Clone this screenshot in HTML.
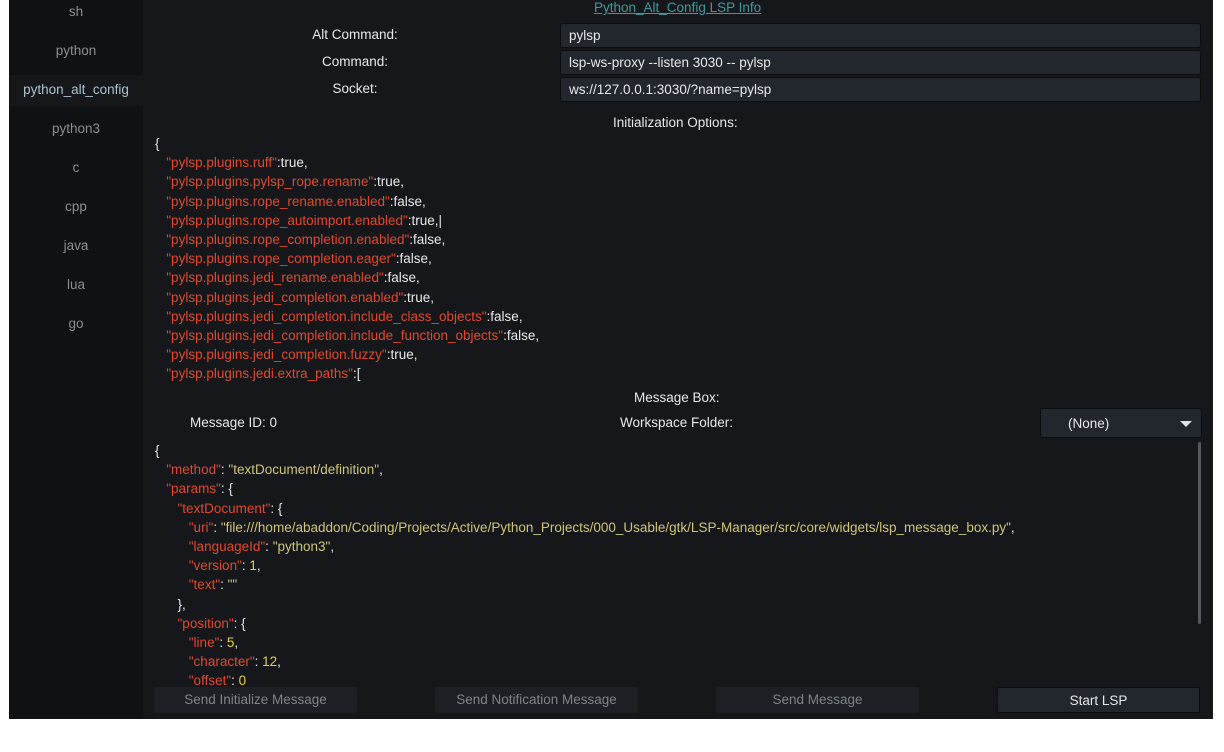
<!DOCTYPE html>
<html><head><meta charset="utf-8"><style>
*{margin:0;padding:0;box-sizing:border-box}
body{width:1224px;height:752px;background:#fff;position:relative;overflow:hidden;font-family:"Liberation Sans",sans-serif;font-size:13.5px;color:#e6e8ea}
#win{position:absolute;left:9px;top:0;width:1204px;height:719px;background:#16171b}
#side{position:absolute;left:9px;top:0;width:134px;height:719px;background:#101114}
.tab{position:absolute;left:9px;width:134px;text-align:center;color:#8a8d92}
.sel{background:#16171b;color:#a9c3d0}
.a{position:absolute;white-space:pre}
.lbl{position:absolute;text-align:center;white-space:nowrap}
.inp{position:absolute;left:560px;width:641px;height:25px;background:#22262d;border:1px solid #0c0d0f;border-radius:3px;padding:4px 0 0 8px}
.k{color:#e0492e}.s{color:#cfc575}.n{color:#e8d23f}.p{color:#e6e8ea}
.btn{position:absolute;top:687px;height:26px;background:#1d1f24;color:#7f838a;text-align:center;padding-top:5px;border-radius:2px}
</style></head><body>
<div id="win"></div><div id="side"></div>
<div class="tab" style="top:4px">sh</div>
<div class="tab" style="top:43px">python</div>
<div class="tab sel" style="top:75px;height:31px;padding-top:7px">python_alt_config</div>
<div class="tab" style="top:121px">python3</div>
<div class="tab" style="top:160px">c</div>
<div class="tab" style="top:199px">cpp</div>
<div class="tab" style="top:238px">java</div>
<div class="tab" style="top:277px">lua</div>
<div class="tab" style="top:316px">go</div>

<div class="a" style="left:594px;top:0px;color:#3f9a9c;text-decoration:underline">Python_Alt_Config LSP Info</div>
<div class="lbl" style="left:290px;width:130px;top:27px">Alt Command:</div>
<div class="lbl" style="left:290px;width:130px;top:54px">Command:</div>
<div class="lbl" style="left:290px;width:130px;top:81px">Socket:</div>
<div class="inp" style="top:23px">pylsp</div>
<div class="inp" style="top:50px">lsp-ws-proxy --listen 3030 -- pylsp</div>
<div class="inp" style="top:77px">ws://127.0.0.1:3030/?name=pylsp</div>
<div class="a" style="left:613px;top:115px">Initialization Options:</div>

<div class="a" style="left:155px;top:134px;line-height:19.2px"><span class="p">{</span>
   <span class="k">"pylsp.plugins.ruff"</span><span class="p">:true,</span>
   <span class="k">"pylsp.plugins.pylsp_rope.rename"</span><span class="p">:true,</span>
   <span class="k">"pylsp.plugins.rope_rename.enabled"</span><span class="p">:false,</span>
   <span class="k">"pylsp.plugins.rope_autoimport.enabled"</span><span class="p">:true,|</span>
   <span class="k">"pylsp.plugins.rope_completion.enabled"</span><span class="p">:false,</span>
   <span class="k">"pylsp.plugins.rope_completion.eager"</span><span class="p">:false,</span>
   <span class="k">"pylsp.plugins.jedi_rename.enabled"</span><span class="p">:false,</span>
   <span class="k">"pylsp.plugins.jedi_completion.enabled"</span><span class="p">:true,</span>
   <span class="k">"pylsp.plugins.jedi_completion.include_class_objects"</span><span class="p">:false,</span>
   <span class="k">"pylsp.plugins.jedi_completion.include_function_objects"</span><span class="p">:false,</span>
   <span class="k">"pylsp.plugins.jedi_completion.fuzzy"</span><span class="p">:true,</span>
   <span class="k">"pylsp.plugins.jedi.extra_paths"</span><span class="p">:[</span></div>

<div class="a" style="left:634px;top:390px">Message Box:</div>
<div class="a" style="left:190px;top:415px">Message ID: 0</div>
<div class="a" style="left:620px;top:415px">Workspace Folder:</div>
<div style="position:absolute;left:1040px;top:408px;width:162px;height:30px;background:#22262d;border:1px solid #0c0d0f;border-radius:3px;padding:7px 0 0 27px">(None)<span style="position:absolute;right:9px;top:12px;width:0;height:0;border-left:6px solid transparent;border-right:6px solid transparent;border-top:6px solid #dfe2e5"></span></div>
<div style="position:absolute;left:1198px;top:442px;width:3px;height:182px;background:#55585d;border-radius:2px"></div>

<div class="a" style="left:155px;top:441px;line-height:19.2px"><span class="p">{</span>
   <span class="k">"method"</span><span class="p">: </span><span class="s">"textDocument/definition"</span><span class="p">,</span>
   <span class="k">"params"</span><span class="p">: {</span>
      <span class="k">"textDocument"</span><span class="p">: {</span>
         <span class="k">"uri"</span><span class="p">: </span><span class="s">"file:///home/abaddon/Coding/Projects/Active/Python_Projects/000_Usable/gtk/LSP-Manager/src/core/widgets/lsp_message_box.py"</span><span class="p">,</span>
         <span class="k">"languageId"</span><span class="p">: </span><span class="s">"python3"</span><span class="p">,</span>
         <span class="k">"version"</span><span class="p">: </span><span class="n">1</span><span class="p">,</span>
         <span class="k">"text"</span><span class="p">: </span><span class="s">""</span>
      <span class="p">},</span>
      <span class="k">"position"</span><span class="p">: {</span>
         <span class="k">"line"</span><span class="p">: </span><span class="n">5</span><span class="p">,</span>
         <span class="k">"character"</span><span class="p">: </span><span class="n">12</span><span class="p">,</span>
         <span class="k">"offset"</span><span class="p">: </span><span class="n">0</span></div>

<div class="btn" style="left:154px;width:203px">Send Initialize Message</div>
<div class="btn" style="left:435px;width:203px">Send Notification Message</div>
<div class="btn" style="left:716px;width:203px">Send Message</div>
<div class="btn" style="left:997px;width:203px;background:#22262d;color:#e6e8ea;border:1px solid #0c0d0f">Start LSP</div>
</body></html>
